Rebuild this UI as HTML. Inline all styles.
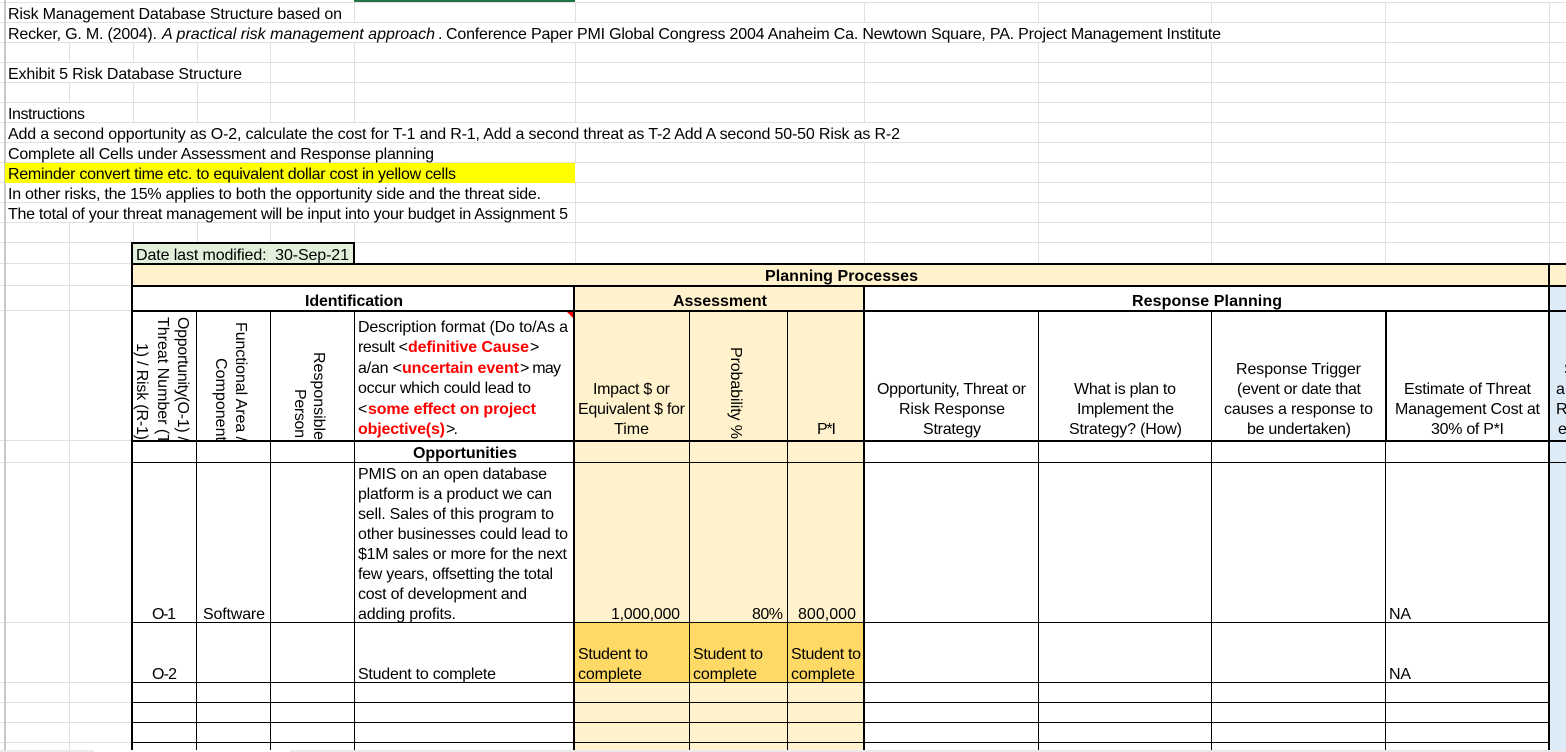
<!DOCTYPE html>
<html><head><meta charset="utf-8"><title>Risk Management Database Structure</title>
<style>
html,body{margin:0;padding:0;background:#fff;width:1566px;height:752px;overflow:hidden}
svg{display:block}
text{font-family:"Liberation Sans",Arial,sans-serif;font-size:16px;fill:#000;white-space:pre}
.b{font-weight:bold}
.r{font-weight:bold;fill:#f00}
.i{font-style:italic}
</style></head><body>
<svg xmlns="http://www.w3.org/2000/svg" width="1566" height="752" viewBox="0 0 1566 752">
<defs>
<clipPath id="c1"><rect x="133" y="312" width="63" height="128"/></clipPath>
<clipPath id="c2"><rect x="197" y="312" width="73" height="128"/></clipPath>
<clipPath id="c3"><rect x="1550" y="312" width="16" height="128"/></clipPath>
</defs>
<rect width="1566" height="752" fill="#fff"/>
<!-- gridlines -->
<path stroke="#e1e1e1" stroke-width="1" fill="none" d="M0 2.5H1566M0 22.5H1566M0 42.5H1566M0 62.5H1566M0 82.5H1566M0 102.5H1566M0 122.5H1566M0 142.5H1566M0 162.5H1566M0 182.5H1566M0 202.5H1566M0 222.5H1566M0 242.5H1566M0 263.5H131M0 285.5H131M0 310.5H131M0 440.5H131M0 462.5H131M0 622.5H131M0 682.5H131M0 702.5H131M0 722.5H131M0 742.5H131
M69.5 42V62M69.5 82V102M69.5 222V750
M133.5 42V62M133.5 82V122M133.5 222V242
M197.5 42V62M197.5 82V122M197.5 222V242
M270.5 42V122M270.5 222V242
M354.5 2V22M354.5 42V122M354.5 222V242
M575.5 2V22M575.5 42V122M575.5 142V162M575.5 182V264
M864.5 2V22M864.5 42V122M864.5 142V264
M1038.5 2V22M1038.5 42V264
M1211.5 2V22M1211.5 42V264
M1385.5 2V264
M1549.5 2V264"/>
<rect x="4" y="0" width="2" height="750" fill="#c8c8c8"/>
<rect x="354" y="0" width="221" height="2" fill="#217346"/>
<rect x="5" y="163" width="570" height="20" fill="#ff0"/>
<!-- fills -->
<rect x="133" y="243" width="221" height="21" fill="#e2efda"/>
<rect x="133" y="264" width="1433" height="22" fill="#fff2cc"/>
<rect x="133" y="286" width="1415" height="464" fill="#fff"/>
<rect x="574" y="286" width="290" height="464" fill="#fff2cc"/>
<rect x="574" y="622" width="290" height="60" fill="#ffd966"/>
<rect x="1549" y="286" width="17" height="464" fill="#ddebf7"/>
<!-- thin table lines -->
<g fill="#000">
<rect x="133" y="462" width="1433" height="1"/>
<rect x="133" y="622" width="1416" height="1"/>
<rect x="133" y="682" width="1416" height="1"/>
<rect x="133" y="702" width="1416" height="1"/>
<rect x="133" y="722" width="1416" height="1"/>
<rect x="133" y="742" width="1416" height="1"/>
<rect x="196" y="311" width="1" height="439"/>
<rect x="270" y="311" width="1" height="439"/>
<rect x="354" y="311" width="1" height="439"/>
<rect x="689" y="311" width="1" height="439"/>
<rect x="787" y="311" width="1" height="439"/>
<rect x="1038" y="311" width="1" height="439"/>
<rect x="1211" y="311" width="1" height="439"/>
<rect x="1385" y="311" width="1" height="439"/>
<rect x="1385" y="311" width="2" height="130"/>
<!-- thick table lines -->
<rect x="131" y="242" width="224" height="2"/>
<rect x="353" y="242" width="2" height="22"/>
<rect x="131" y="242" width="2" height="508"/>
<rect x="131" y="263" width="1435" height="2"/>
<rect x="131" y="285" width="1435" height="2"/>
<rect x="131" y="310" width="1435" height="2"/>
<rect x="131" y="440" width="1435" height="2"/>
<rect x="573" y="285" width="2" height="465"/>
<rect x="863" y="285" width="2" height="465"/>
<rect x="1548" y="263" width="2" height="487"/>
</g>
<polygon points="567,312 573,312 573,318" fill="#f00"/>
<!-- bottom strip -->
<rect x="0" y="750" width="94" height="2" fill="#eaeaea"/>
<rect x="94" y="750" width="196" height="2" fill="#fff"/>
<rect x="290" y="750" width="1276" height="2" fill="#eaeaea"/>
<!-- top text -->
<text x="8" y="19" textLength="334">Risk Management Database Structure based on</text>
<text x="8" y="39" textLength="149">Recker, G. M. (2004).</text>
<text class="i" x="162" y="39" textLength="273">A practical risk management approach</text>
<text x="438" y="39">.</text>
<text x="446" y="39" textLength="775">Conference Paper PMI Global Congress 2004 Anaheim Ca. Newtown Square, PA. Project Management Institute</text>
<text x="8" y="79" textLength="234">Exhibit 5 Risk Database Structure</text>
<text x="8" y="119" textLength="77">Instructions</text>
<text x="8" y="139" textLength="892">Add a second opportunity as O-2, calculate the cost for T-1 and R-1, Add a second threat as T-2 Add A second 50-50 Risk as R-2</text>
<text x="8" y="159" textLength="426">Complete all Cells under Assessment and Response planning</text>
<text x="8" y="179" textLength="448">Reminder convert time etc. to equivalent dollar cost in yellow cells</text>
<text x="8" y="199" textLength="533">In other risks, the 15% applies to both the opportunity side and the threat side.</text>
<text x="8" y="219" textLength="560">The total of your threat management will be input into your budget in Assignment 5</text>
<text x="136" y="260" textLength="213">Date last modified:  30-Sep-21</text>
<!-- section headers -->
<text class="b" x="765" y="281" textLength="153">Planning Processes</text>
<text class="b" x="305" y="306" textLength="98">Identification</text>
<text class="b" x="673" y="306" textLength="94">Assessment</text>
<text class="b" x="1132" y="306" textLength="150">Response Planning</text>
<!-- rotated headers -->
<g clip-path="url(#c1)">
<text transform="translate(178,317) rotate(90)" textLength="124">Opportunity(O-1) /</text>
<text transform="translate(158,317) rotate(90)" textLength="127">Threat Number (T</text>
<text transform="translate(137,343) rotate(90)" textLength="97">1) / Risk (R-1)</text>
</g>
<g clip-path="url(#c2)">
<text transform="translate(236,322) rotate(90)" textLength="119">Functional Area /</text>
<text transform="translate(216,358) rotate(90)" textLength="83">Component</text>
</g>
<text transform="translate(314,352) rotate(90)" textLength="88">Responsible</text>
<text transform="translate(295,389) rotate(90)" textLength="49">Person</text>
<text transform="translate(731,347) rotate(90)" textLength="92">Probability %</text>
<!-- description header -->
<text x="358" y="332" textLength="210">Description format (Do to/As a</text>
<text x="358" y="352" textLength="50">result &lt;</text>
<text class="r" x="408" y="352" textLength="121">definitive Cause</text>
<text x="530" y="352">&gt;</text>
<text x="358" y="373" textLength="44">a/an &lt;</text>
<text class="r" x="402" y="373" textLength="117">uncertain event</text>
<text x="520" y="373" textLength="41">&gt; may</text>
<text x="358" y="393" textLength="173">occur which could lead to</text>
<text x="358" y="414">&lt;</text>
<text class="r" x="368" y="414" textLength="168">some effect on project</text>
<text class="r" x="358" y="434" textLength="87">objective(s)</text>
<text x="446" y="434" textLength="12">&gt;.</text>
<!-- assessment headers -->
<text x="593" y="394" textLength="77">Impact $ or</text>
<text x="578" y="414" textLength="107">Equivalent $ for</text>
<text x="614" y="434" textLength="35">Time</text>
<text x="817" y="434" textLength="19">P*I</text>
<!-- response headers -->
<text x="877" y="394" textLength="149">Opportunity, Threat or</text>
<text x="899" y="414" textLength="106">Risk Response</text>
<text x="923" y="434" textLength="58">Strategy</text>
<text x="1074" y="394" textLength="102">What is plan to</text>
<text x="1077" y="414" textLength="97">Implement the</text>
<text x="1069" y="434" textLength="113">Strategy? (How)</text>
<text x="1236" y="374" textLength="125">Response Trigger</text>
<text x="1237" y="394" textLength="124">(event or date that</text>
<text x="1224" y="414" textLength="149">causes a response to</text>
<text x="1247" y="434" textLength="104">be undertaken)</text>
<text x="1404" y="394" textLength="127">Estimate of Threat</text>
<text x="1395" y="414" textLength="145">Management Cost at</text>
<text x="1431" y="434" textLength="73">30% of P*I</text>
<g clip-path="url(#c3)">
<text x="1564" y="374">S</text>
<text x="1556" y="394">a</text>
<text x="1556" y="414">R</text>
<text x="1558" y="434">e</text>
</g>
<!-- rows -->
<text class="b" x="413" y="458" textLength="104">Opportunities</text>
<text x="358" y="479" textLength="189">PMIS on an open database</text>
<text x="358" y="499" textLength="194">platform is a product we can</text>
<text x="358" y="519" textLength="196">sell. Sales of this program to</text>
<text x="358" y="539" textLength="210">other businesses could lead to</text>
<text x="358" y="559" textLength="209">$1M sales or more for the next</text>
<text x="358" y="579" textLength="195">few years, offsetting the total</text>
<text x="358" y="599" textLength="169">cost of development and</text>
<text x="358" y="619" textLength="98">adding profits.</text>
<text x="152" y="619" textLength="24">O-1</text>
<text x="203" y="619" textLength="62">Software</text>
<text x="611" y="619" textLength="69">1,000,000</text>
<text x="752" y="619" textLength="31">80%</text>
<text x="798" y="619" textLength="58">800,000</text>
<text x="1389" y="619" textLength="22">NA</text>
<text x="152" y="679" textLength="25">O-2</text>
<text x="358" y="679" textLength="138">Student to complete</text>
<text x="578" y="659" textLength="70">Student to</text>
<text x="578" y="679" textLength="64">complete</text>
<text x="693" y="659" textLength="70">Student to</text>
<text x="693" y="679" textLength="64">complete</text>
<text x="791" y="659" textLength="70">Student to</text>
<text x="791" y="679" textLength="64">complete</text>
<text x="1389" y="679" textLength="22">NA</text>
</svg>
</body></html>
